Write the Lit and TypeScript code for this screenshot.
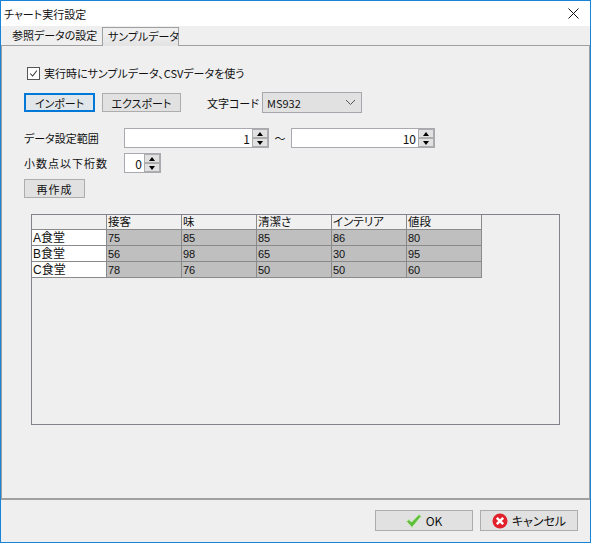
import { LitElement, html, css } from "lit";
import { customElement } from "lit/decorators.js";

const spin = () => html`<span class="spin"><i class="up"></i><i class="down"></i></span>`;

@customElement("app-root")
export class AppRoot extends LitElement {
  static styles = css`
    :host { display: block; width: 591px; height: 543px; font-family: "Noto Sans CJK JP", "Liberation Sans", sans-serif; font-size: 11px; color: #111; font-feature-settings: "palt"; }
    * { box-sizing: border-box; }
    .win { width: 591px; height: 543px; border: 1px solid #1883d7; background: #efefef; display: flex; flex-direction: column; }
    .title { height: 25px; flex: none; background: #fff; display: flex; align-items: center; justify-content: space-between; padding: 0 11px 0 3px; }
    .close { display: block; width: 11px; height: 11px; }
    .tabs { height: 20px; flex: none; display: flex; align-items: flex-end; border-bottom: 1px solid #a0a0a0; }
    .tab { height: 18px; padding: 0 0 0 11px; line-height: 17px; width: 101px; white-space: nowrap; }
    .tab.active { height: 19px; margin-bottom: -1px; width: 77px; padding: 0 0 0 5px; line-height: 17px; border: 1px solid #a0a0a0; border-bottom: 0; background: linear-gradient(#efefef 6px, #e4e4e4 16px); }
    .panel { height: 454px; flex: none; border-right: 1px solid #a0a0a0; border-left: 1px solid #a0a0a0; border-bottom: 2px solid #a0a0a0; padding: 20px 0 0 0; display: flex; flex-direction: column; }
    .row { display: flex; align-items: center; }
    .chkrow { margin-left: 25px; height: 14px; gap: 4px; }
    .chk { width: 13px; height: 13px; border: 1px solid #555; background: #fff; display: block; flex: none; }
    .btn { background: #e1e1e1; border: 1px solid #adadad; display: flex; align-items: center; justify-content: center; height: 19px; white-space: nowrap; }
    .btnrow { margin: 12px 0 0 22px; height: 21px; }
    .import { width: 71px; border: 2px solid #0078d7; background: #e1e6ea; }
    .export { width: 79px; margin-left: 7px; }
    .lbl { margin-left: 26px; width: 55px; white-space: nowrap; }
    .select { width: 100px; height: 21px; background: #e1e1e1; border: 1px solid #a6a6ad; display: flex; align-items: center; justify-content: space-between; padding: 0 5px 0 4px; }
    .select svg { width: 11px; height: 7px; }
    .rangerow { margin: 15px 0 0 22px; height: 20px; }
    .fieldlbl { width: 100px; white-space: nowrap; }
    .spaced { letter-spacing: 1px; }
    .num { height: 20px; background: #fff; border: 1px solid #a9a9b0; display: flex; align-items: center; justify-content: flex-end; font-size: 12px; }
    .num b { font-weight: 400; margin-right: 2px; }
    .w145 { width: 145px; }
    .w144 { width: 144px; }
    .w37 { width: 37px; }
    .spin { width: 16px; height: 18px; display: flex; flex-direction: column; background: #e1e1e1; }
    .spin i { flex: 1; position: relative; display: block; border: 1px solid #adadad; }
    .spin i::after { content: ""; position: absolute; left: 4px; width: 0; height: 0; border-left: 3px solid transparent; border-right: 3px solid transparent; }
    .spin .up::after { top: 2px; border-bottom: 4px solid #000; }
    .spin .down::after { top: 2px; border-top: 4px solid #000; }
    .tilde { width: 22px; text-align: center; }
    .decrow { margin: 5px 0 0 22px; height: 20px; }
    .remake { width: 61px; margin: 6px 0 0 22px; letter-spacing: 1px; flex: none; }
    .tablebox { margin: 16px 0 0 29px; width: 529px; height: 211px; border: 1px solid #80848a; flex: none; }
    table { border-collapse: separate; border-spacing: 0; table-layout: fixed; width: 450px; line-height: 14px; }
    td, th { font-weight: 400; padding: 1px 0 0 1px; text-align: left; height: 16px; overflow: hidden; white-space: nowrap; border-right: 1px solid #8a8a8a; border-bottom: 1px solid #8a8a8a; width: 75px; font-family: "Liberation Sans", "Noto Sans CJK JP", sans-serif; }
    thead th { height: 15px; padding-top: 0; background: #f0f0f0; font-size: 11.5px; }
    tbody th { background: #fff; font-size: 12px; }
    tbody td { background: #bfbfbf; font-size: 11px; }
    .foot { flex: none; height: 42px; display: flex; justify-content: flex-end; align-items: flex-start; padding: 10px 12px 0 0; gap: 7px; }
    .foot .btn { width: 98px; height: 21px; gap: 4px; font-size: 12px; }
    .foot svg { width: 16px; height: 16px; flex: none; }
  `;

  render() {
    const heads = ["", "接客", "味", "清潔さ", "インテリア", "値段"];
    const rows: [string, string[]][] = [
      ["A食堂", ["75", "85", "85", "86", "80"]],
      ["B食堂", ["56", "98", "65", "30", "95"]],
      ["C食堂", ["78", "76", "50", "50", "60"]],
    ];
    return html`<div class="win">
      <div class="title"><span>チャート実行設定</span>
        <svg class="close" viewBox="0 0 11 11"><path d="M.5.5l10 10M10.5.5l-10 10" stroke="#111" fill="none" stroke-width="1"/></svg>
      </div>
      <div class="tabs"><div class="tab">参照データの設定</div><div class="tab active">サンプルデータ</div></div>
      <div class="panel">
        <div class="row chkrow">
          <svg class="chk" viewBox="0 0 13 13"><path d="M2.5 6.500l3 3 5-6.500" fill="none" stroke="#333" stroke-width="1.2"/></svg>
          <span>実行時にサンプルデータ、CSVデータを使う</span>
        </div>
        <div class="row btnrow">
          <div class="btn import">インポート</div><div class="btn export">エクスポート</div>
          <div class="lbl">文字コード</div>
          <div class="select"><span>MS932</span><svg viewBox="0 0 11 7"><path d="M1 1l4.500 4.500L10 1" fill="none" stroke="#555"/></svg></div>
        </div>
        <div class="row rangerow">
          <div class="fieldlbl">データ設定範囲</div>
          <div class="num w145"><b>1</b>${spin()}</div>
          <div class="tilde">～</div>
          <div class="num w144"><b>10</b>${spin()}</div>
        </div>
        <div class="row decrow">
          <div class="fieldlbl spaced">小数点以下桁数</div>
          <div class="num w37"><b>0</b>${spin()}</div>
        </div>
        <div class="btn remake">再作成</div>
        <div class="tablebox">
          <table>
            <thead><tr>${heads.map((h) => html`<th>${h}</th>`)}</tr></thead>
            <tbody>${rows.map(([n, vals]) => html`<tr><th>${n}</th>${vals.map((v) => html`<td>${v}</td>`)}</tr>`)}</tbody>
          </table>
        </div>
      </div>
      <div class="foot">
        <div class="btn"><svg viewBox="0 0 16 16"><path d="M.5 8.500l2.500-2 2.500 2.500L13 1.500l2.500 1.500L6 14.500z" fill="#5fbf3a" stroke="#cfe9bf" stroke-width="1"/></svg><span>OK</span></div>
        <div class="btn"><svg viewBox="0 0 16 16"><circle cx="8" cy="8" r="7.500" fill="#e0202a"/><path d="M4.800 4.800l6.400 6.400M11.200 4.800l-6.400 6.400" stroke="#fff" stroke-width="2.500"/></svg><span>キャンセル</span></div>
      </div>
    </div>`;
  }
}
